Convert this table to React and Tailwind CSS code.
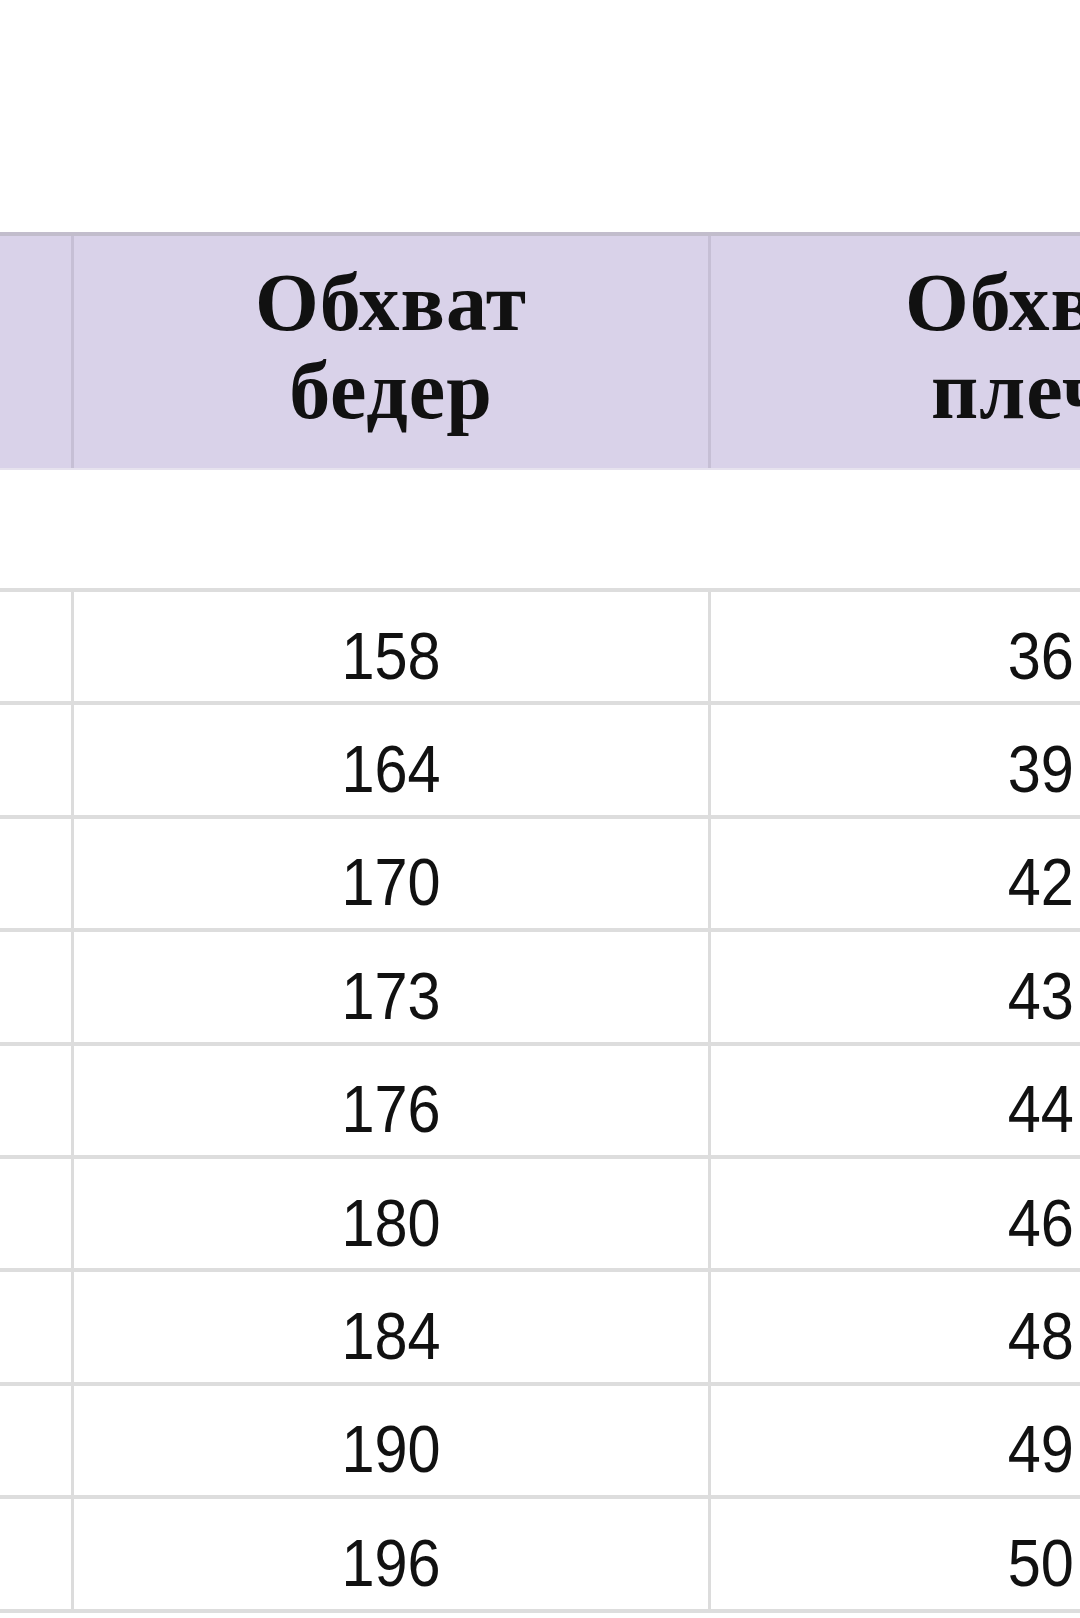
import React from "react";

const rows = [
  ["158", "36"],
  ["164", "39"],
  ["170", "42"],
  ["173", "43"],
  ["176", "44"],
  ["180", "46"],
  ["184", "48"],
  ["190", "49"],
  ["196", "50"],
];

const headers = ["Обхват бедер", "Обхват плеча"];

export default function App() {
  return (
    <div className="w-[1080px] h-[1618px] overflow-hidden bg-white">
      <div className="h-[232px]" />
      <div className="w-[1371px]">
        {/* Шапка таблицы */}
        <div className="grid grid-cols-[74px_637px_660px] h-[238px] border-t-4 border-[#c2bdcc] bg-[#d9d2e9] border-b-2 border-b-[#e6e2ee]">
          <div className="border-r-[3px] border-[#c6bfd5]" />
          {headers.map((h, i) => (
            <div
              key={h}
              className={
                "flex items-center justify-center pb-[10px] " +
                (i === 0 ? "border-r-[3px] border-[#c6bfd5]" : "")
              }
            >
              <p
                className="text-center text-[82px] leading-[88px] font-bold tracking-[1px] text-[#111]"
                style={{ fontFamily: '"Liberation Serif", "Times New Roman", serif' }}
              >
                {h.split(" ")[0]}
                <br />
                {h.split(" ")[1]}
              </p>
            </div>
          ))}
        </div>

        {/* Пустая строка */}
        <div className="grid grid-cols-[74px_637px_660px] h-[122px] border-b-4 border-[#dddddd]">
          <div />
          <div />
          <div />
        </div>

        {/* Данные */}
        {rows.map((r) => (
          <div
            key={r[0]}
            className="grid grid-cols-[74px_637px_660px] h-[113.4px] border-b-4 border-[#dddddd]"
          >
            <div className="border-r-[3px] border-[#dcdcdc]" />
            {r.map((v, i) => (
              <div
                key={i}
                className={
                  "flex items-center justify-center pt-[18px] " +
                  (i === 0 ? "border-r-[3px] border-[#dcdcdc]" : "")
                }
              >
                <span
                  className="inline-block text-[66px] leading-none text-[#111] scale-x-[0.9]"
                  style={{ fontFamily: '"Liberation Sans", Arial, sans-serif' }}
                >
                  {v}
                </span>
              </div>
            ))}
          </div>
        ))}
      </div>
    </div>
  );
}
